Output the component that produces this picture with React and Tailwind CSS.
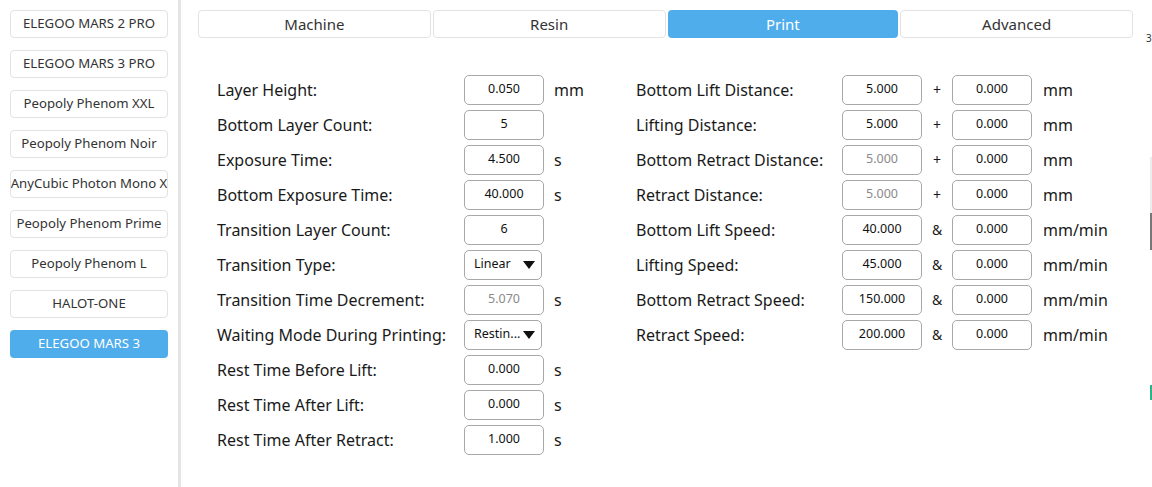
import React from "react";

const printers = [
  "ELEGOO MARS 2 PRO",
  "ELEGOO MARS 3 PRO",
  "Peopoly Phenom XXL",
  "Peopoly Phenom Noir",
  "AnyCubic Photon Mono X",
  "Peopoly Phenom Prime",
  "Peopoly Phenom L",
  "HALOT-ONE",
  "ELEGOO MARS 3",
];

const tabs = ["Machine", "Resin", "Print", "Advanced"];

const leftRows = [
  { label: "Layer Height:", value: "0.050", unit: "mm" },
  { label: "Bottom Layer Count:", value: "5" },
  { label: "Exposure Time:", value: "4.500", unit: "s" },
  { label: "Bottom Exposure Time:", value: "40.000", unit: "s" },
  { label: "Transition Layer Count:", value: "6" },
  { label: "Transition Type:", select: "Linear" },
  { label: "Transition Time Decrement:", value: "5.070", unit: "s", disabled: true },
  { label: "Waiting Mode During Printing:", select: "Restin..." },
  { label: "Rest Time Before Lift:", value: "0.000", unit: "s" },
  { label: "Rest Time After Lift:", value: "0.000", unit: "s" },
  { label: "Rest Time After Retract:", value: "1.000", unit: "s" },
];

const rightRows = [
  { label: "Bottom Lift Distance:", a: "5.000", op: "+", b: "0.000", unit: "mm" },
  { label: "Lifting Distance:", a: "5.000", op: "+", b: "0.000", unit: "mm" },
  { label: "Bottom Retract Distance:", a: "5.000", op: "+", b: "0.000", unit: "mm", disabled: true },
  { label: "Retract Distance:", a: "5.000", op: "+", b: "0.000", unit: "mm", disabled: true },
  { label: "Bottom Lift Speed:", a: "40.000", op: "&", b: "0.000", unit: "mm/min" },
  { label: "Lifting Speed:", a: "45.000", op: "&", b: "0.000", unit: "mm/min" },
  { label: "Bottom Retract Speed:", a: "150.000", op: "&", b: "0.000", unit: "mm/min" },
  { label: "Retract Speed:", a: "200.000", op: "&", b: "0.000", unit: "mm/min" },
];

const Box = ({ value, disabled }) => (
  <div
    className={`w-[80px] h-[30px] flex items-center justify-center rounded-[5px] border border-[#a8a8a8] bg-white text-[12.5px] ${
      disabled ? "text-[#8a8a8a]" : "text-[#111]"
    }`}
  >
    {value}
  </div>
);

const Select = ({ value }) => (
  <div className="w-[78px] h-[30px] flex items-center rounded-[5px] border border-[#a8a8a8] bg-white text-[12.5px] text-[#111] pl-[9px] pr-[6px]">
    <span className="flex-1 truncate">{value}</span>
    <span className="w-0 h-0 border-l-[6px] border-r-[6px] border-t-[8px] border-l-transparent border-r-transparent border-t-[#111]" />
  </div>
);

export default function App() {
  return (
    <div
      className="w-[1152px] h-[487px] flex bg-white overflow-hidden text-[#1a1a1a]"
      style={{ fontFamily: '"Noto Sans", "Open Sans", sans-serif' }}
    >
      {/* printer list */}
      <div className="w-[181px] shrink-0 border-r-[3px] border-[#e4e4e4] flex flex-col gap-[12px] pt-[10px] pl-[10px] pr-[10px]">
        {printers.map((p) => {
          const active = p === "ELEGOO MARS 3";
          return (
            <div
              key={p}
              className={`w-[158px] h-[28px] flex items-center justify-center rounded-[4px] text-[13.2px] whitespace-nowrap overflow-hidden ${
                active
                  ? "bg-[#50adec] text-white"
                  : "bg-white text-[#333] border border-[#e3e3e3]"
              }`}
            >
              {p}
            </div>
          );
        })}
      </div>

      {/* main */}
      <div className="flex-1 flex flex-col pl-[17px] pt-[10px]">
        <div className="flex gap-[2px] w-[935px]">
          {tabs.map((t) => (
            <div
              key={t}
              className={`flex-1 h-[28px] flex items-center justify-center rounded-[4px] text-[15px] ${
                t === "Print"
                  ? "bg-[#50adec] text-white"
                  : "bg-white text-[#333] border border-[#e3e3e3]"
              }`}
            >
              {t}
            </div>
          ))}
        </div>

        <div className="flex mt-[34px] pl-[19px]">
          <div className="flex flex-col w-[419px]">
            {leftRows.map((r) => (
              <div key={r.label} className="h-[35px] flex items-center">
                <div className="w-[247px] text-[16px]">{r.label}</div>
                {r.select ? <Select value={r.select} /> : <Box value={r.value} disabled={r.disabled} />}
                {r.unit && <div className="ml-[10px] text-[16px]">{r.unit}</div>}
              </div>
            ))}
          </div>

          <div className="flex flex-col">
            {rightRows.map((r) => (
              <div key={r.label} className="h-[35px] flex items-center">
                <div className="w-[206px] text-[16px]">{r.label}</div>
                <Box value={r.a} disabled={r.disabled} />
                <div className="w-[30px] text-center text-[14px]">{r.op}</div>
                <Box value={r.b} />
                <div className="ml-[11px] text-[16px]">{r.unit}</div>
              </div>
            ))}
          </div>
        </div>
      </div>

      {/* clipped neighbour panel */}
      <div className="w-[6px] shrink-0 flex flex-col pt-[33px]">
        <div className="text-[10px] leading-none text-[#333]">3</div>
        <div className="mt-[114px] ml-[4px] w-[2px] h-[56px] bg-[#ececec]" />
        <div className="ml-[4px] w-[2px] h-[37px] bg-[#777]" />
        <div className="mt-[135px] ml-[4px] w-[2px] h-[15px] bg-[#2bb58a]" />
      </div>
    </div>
  );
}
